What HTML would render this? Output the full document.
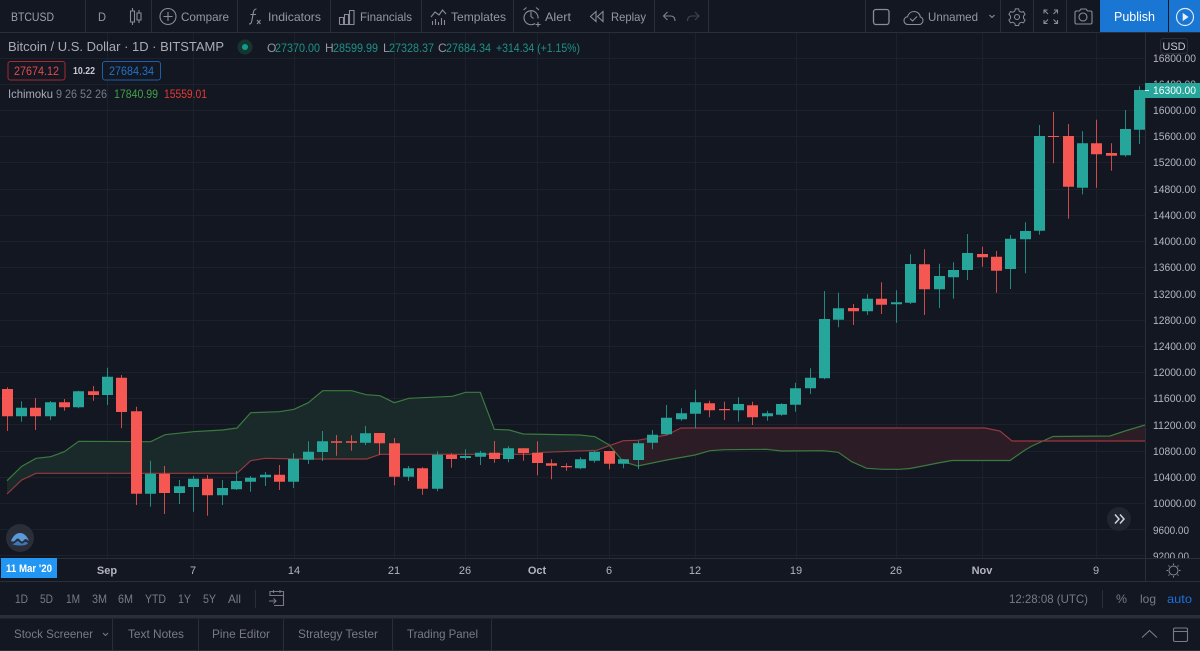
<!DOCTYPE html>
<html><head><meta charset="utf-8"><title>BTCUSD</title>
<style>
html,body{margin:0;padding:0;background:#131722;width:1200px;height:651px;overflow:hidden}
svg{display:block;font-family:"Liberation Sans",sans-serif;filter:blur(.3px)}
.t{fill:#9598a1;font-size:12px}
.i{fill:none;stroke:#8a8d97;stroke-width:1.1}
.p{fill:#b2b5be;font-size:11px}
.a{fill:#b2b5be;font-size:11px;text-anchor:middle}
.b{fill:#b2b5be;font-size:11px;font-weight:bold;text-anchor:middle}
.m{fill:#787b86;font-size:12px}
.g{fill:#1f9186;font-size:12px}
.l{fill:#9598a1;font-size:12px}
</style></head><body>
<svg width="1200" height="651" viewBox="0 0 1200 651" xmlns="http://www.w3.org/2000/svg">
<rect width="1200" height="651" fill="#131722"/>
<!-- grid -->
<path stroke="#1d212c" stroke-width="1" fill="none" d="M0 58.5H1145M0 84.5H1145M0 110.5H1145M0 136.5H1145M0 162.5H1145M0 189.5H1145M0 215.5H1145M0 241.5H1145M0 267.5H1145M0 293.5H1145M0 320.5H1145M0 346.5H1145M0 372.5H1145M0 398.5H1145M0 424.5H1145M0 451.5H1145M0 477.5H1145M0 503.5H1145M0 529.5H1145M0 555.5H1145M107.5 33V558M193.5 33V558M294.5 33V558M394.5 33V558M465.5 33V558M537.5 33V558M609.5 33V558M695.5 33V558M796.5 33V558M896.5 33V558M982.5 33V558M1096.5 33V558"/>
<!-- cloud -->
<path fill="#1a2a2a" d="M7 480.7L21.7 466.3 36 458.3 50.7 456.7 64.3 451.7 78.7 441.3 150.7 441.7 165 434.7 193.3 431.7 222.3 430 237 428 250.7 412.7 279.3 411.7 294 409.3 308.3 402.7 322.7 390.7 351.7 390.7 366 394.7 380 395.7 394.3 402.7 409 398.3 452.3 396.3 465.7 392.3 480.3 392.3 494.3 429.3 509.3 430 523.3 434 580 435 595 436.7 609.3 445.5 596.7 450.3 543 452.3 530 454.3 380 454.3 366.7 459 300 459 265 458.3 250.7 460.7 237 473.3 36 473.3 21.7 480 7 494Z"/>
<path fill="#2c1c26" d="M609.3 445.5L623.3 440.7 637.7 440.3 666.7 435 681 428 985 428 1000 431 1012 441 1145 441 1145 425 1125 431 1110 436 1053 436.5 1032 446 1025 450 1010 460.5 952 460.5 938 463 923 466 910 468.5 900 469.3 883 469.3 866.7 468.3 851.7 461.7 838.3 452.3 823.3 450.7 781.7 451 766.7 449.3 724 449.7 710 450.7 695 455 666.7 460 637.7 466 623.3 461.7Z"/>
<path fill="none" stroke="#3b7a3e" stroke-width="1.2" d="M7 480.7L21.7 466.3 36 458.3 50.7 456.7 64.3 451.7 78.7 441.3 150.7 441.7 165 434.7 193.3 431.7 222.3 430 237 428 250.7 412.7 279.3 411.7 294 409.3 308.3 402.7 322.7 390.7 351.7 390.7 366 394.7 380 395.7 394.3 402.7 409 398.3 452.3 396.3 465.7 392.3 480.3 392.3 494.3 429.3 509.3 430 523.3 434 580 435 595 436.7 609.3 445 623.3 461.7 637.7 466 666.7 460 695 455 710 450.7 724 449.7 766.7 449.3 781.7 451 823.3 450.7 838.3 452.3 851.7 461.7 866.7 468.3 883 469.3 900 469.3 910 468.5 923 466 938 463 952 460.5 1010 460.5 1025 450 1032 446 1053 436.5 1110 436 1125 431 1145 425"/>
<path fill="none" stroke="#98383e" stroke-width="1.2" d="M7 494L21.7 480 36 473.3 237 473.3 250.7 460.7 265 458.3 300 459 366.7 459 380 454.3 530 454.3 543 452.3 596.7 450.3 609.3 445.7 623.3 440.7 637.7 440.3 666.7 435 681 428 985 428 1000 431 1012 441 1145 441"/>
<!-- green wicks -->
<path fill="none" stroke="#26a69a" stroke-opacity=".8" stroke-width="1" d="M21.5 401.3V421.7M50.5 401V420M78.5 390.7V408.3M107.5 367.7V405M150.5 460.7V506.7M179.5 480V504M193.5 476V511.7M222.5 480V505M236.5 471V490M250.5 476V491.7M265.5 472V486M293.5 453.3V488M308.5 441.3V464M322.5 431V461M365.5 426V445M408.5 466V481M437.5 451.3V491.3M465.5 449.3V460M480.5 450.7V465M508.5 446.3V462.3M580.5 457.3V469.3M594.5 451V462.7M623.5 459V468.3M638.5 440.7V469.3M652.5 430V449.3M666.5 405V435M681.5 408.3V420.7M695.5 389.7V428.3M738.5 397.3V421.7M767.5 410.7V420.7M781.5 403.3V415.7M795.5 382.7V411.7M810.5 368.3V394M824.5 291V379.3M838.5 292.7V327.3M867.5 294.3V315M896.5 290.3V322.7M910.5 254.3V304M939.5 263.7V308M953.5 262.3V298.7M967.5 234V280M1010.5 235V289M1025.5 222.3V273.3M1039.5 125V234.7M1082.5 131.3V194.3M1125.5 110V156.7M1139.5 86V144"/>
<!-- red wicks -->
<path fill="none" stroke="#ef5350" stroke-opacity=".85" stroke-width="1" d="M7.5 387.3V431M35.5 398V430M64.5 399V410.7M93.5 386V400.7M121.5 375V428.3M136.5 406.7V505M164.5 466V514M207.5 475V515.7M279.5 465V490M336.5 435V455.7M351.5 435.3V450.7M379.5 433V455M394.5 438V485.3M422.5 467.3V494.7M451.5 453.3V467.7M494.5 441V462.7M523.5 448.3V460.7M537.5 441.3V475.3M551.5 459.3V479.3M566.5 463.3V470.7M609.5 451V469.3M709.5 400.7V417.3M724.5 401.7V420M752.5 401.7V425M853.5 304V325M881.5 282.3V314M924.5 249.3V315M982.5 246.7V266.7M996.5 251V292.7M1053.5 112V163.3M1068.5 124V218.7M1096.5 119.7V187.7M1111.5 143.3V170.7"/>
<!-- green bodies -->
<path fill="none" stroke="#26a69a" stroke-width="11" d="M21.5 407.7V416.3M50.5 402.3V416.3M78.5 391.3V407.3M107.5 376.7V395M150.5 473.7V493.7M179.5 486.3V493M193.5 478.7V487M222.5 488V495.3M236.5 481V489.3M250.5 477.7V481.7M265.5 474.7V477.3M293.5 459V481.7M308.5 451.7V459.7M322.5 441.3V452M365.5 433.3V442.7M408.5 468.3V476.7M437.5 454.7V488.7M465.5 456V458M480.5 452.7V456.7M508.5 448.3V459M580.5 459.3V468.3M594.5 451.7V460.7M623.5 459.3V463.7M638.5 443.3V460M652.5 434.7V442.7M666.5 417.7V434.3M681.5 413.3V419.3M695.5 402.3V413.7M738.5 404V410.3M767.5 413.3V416.3M781.5 404V414.7M795.5 388.3V404.7M810.5 377.7V388.3M824.5 319V378.3M838.5 308.3V319.7M867.5 298.7V311.3M896.5 302.3V304.3M910.5 264V302.7M939.5 276V289.3M953.5 270V277.3M967.5 253V270M1010.5 238.7V269M1025.5 231V239.3M1039.5 136V230.7M1082.5 143.3V187.7M1125.5 129V155.3M1139.5 90V129.7"/>
<!-- red bodies -->
<path fill="none" stroke="#f55753" stroke-width="11" d="M7.5 389V416.3M35.5 407.7V416.3M64.5 402.3V407.3M93.5 391.3V395M121.5 377.7V412M136.5 411.3V493.7M164.5 473.7V493M207.5 478.7V495.3M279.5 474.7V481.7M336.5 441.3V442.7M351.5 441.3V442.7M379.5 433V443.3M394.5 443.3V476.7M422.5 468.3V488.7M451.5 454.7V459M494.5 452.7V459M523.5 448.3V453M537.5 452.7V463M551.5 463.3V465.7M566.5 466V467.3M609.5 451V463.7M709.5 403.3V410.3M724.5 409V410.3M752.5 405.3V417.3M853.5 308V311.3M881.5 298.7V304.7M924.5 264.3V289.3M982.5 254V257.3M996.5 256.7V270.7M1053.5 136V137M1068.5 136V186.7M1096.5 143.3V154.3M1111.5 153V155.7"/>

<!-- right price axis -->
<rect x="1145" y="33" width="55" height="525" fill="#131722"/>
<path d="M1145.5 33V581" stroke="#2a2e39"/>
<g class="p">
<text x="1153" y="62" textLength="43" lengthAdjust="spacingAndGlyphs">16800.00</text>
<text x="1153" y="88" textLength="43" lengthAdjust="spacingAndGlyphs">16400.00</text>
<text x="1153" y="114" textLength="43" lengthAdjust="spacingAndGlyphs">16000.00</text>
<text x="1153" y="140" textLength="43" lengthAdjust="spacingAndGlyphs">15600.00</text>
<text x="1153" y="166" textLength="43" lengthAdjust="spacingAndGlyphs">15200.00</text>
<text x="1153" y="193" textLength="43" lengthAdjust="spacingAndGlyphs">14800.00</text>
<text x="1153" y="219" textLength="43" lengthAdjust="spacingAndGlyphs">14400.00</text>
<text x="1153" y="245" textLength="43" lengthAdjust="spacingAndGlyphs">14000.00</text>
<text x="1153" y="271" textLength="43" lengthAdjust="spacingAndGlyphs">13600.00</text>
<text x="1153" y="298" textLength="43" lengthAdjust="spacingAndGlyphs">13200.00</text>
<text x="1153" y="324" textLength="43" lengthAdjust="spacingAndGlyphs">12800.00</text>
<text x="1153" y="350" textLength="43" lengthAdjust="spacingAndGlyphs">12400.00</text>
<text x="1153" y="376" textLength="43" lengthAdjust="spacingAndGlyphs">12000.00</text>
<text x="1153" y="402" textLength="43" lengthAdjust="spacingAndGlyphs">11600.00</text>
<text x="1153" y="429" textLength="43" lengthAdjust="spacingAndGlyphs">11200.00</text>
<text x="1153" y="455" textLength="43" lengthAdjust="spacingAndGlyphs">10800.00</text>
<text x="1153" y="481" textLength="43" lengthAdjust="spacingAndGlyphs">10400.00</text>
<text x="1153" y="507" textLength="43" lengthAdjust="spacingAndGlyphs">10000.00</text>
<text x="1153" y="534" textLength="36" lengthAdjust="spacingAndGlyphs">9600.00</text>
<text x="1153" y="560" textLength="36" lengthAdjust="spacingAndGlyphs">9200.00</text>
</g>
<rect x="1145" y="83" width="55" height="15" fill="#26a69a"/>
<path d="M1145 90.5H1149" stroke="#e8f5f3"/>
<text x="1153" y="94" font-size="11" fill="#ffffff" textLength="43" lengthAdjust="spacingAndGlyphs">16300.00</text>
<rect x="1160.5" y="38.5" width="27" height="15" rx="3" fill="#131722" stroke="#2a2e39"/>
<text x="1174" y="50" class="a" style="fill:#c6c8cf">USD</text>

<!-- time axis -->
<rect x="0" y="558" width="1200" height="23" fill="#131722"/>
<path d="M0 558.5H1200M0 581.5H1200" stroke="#2a2e39"/>
<path d="M1145.5 558V581" stroke="#2a2e39"/>
<text x="107" y="574" class="b">Sep</text>
<text x="193" y="574" class="a">7</text>
<text x="294" y="574" class="a">14</text>
<text x="394" y="574" class="a">21</text>
<text x="465" y="574" class="a">26</text>
<text x="537" y="574" class="b">Oct</text>
<text x="609" y="574" class="a">6</text>
<text x="695" y="574" class="a">12</text>
<text x="796" y="574" class="a">19</text>
<text x="896" y="574" class="a">26</text>
<text x="982" y="574" class="b">Nov</text>
<text x="1096" y="574" class="a">9</text>
<rect x="1" y="558" width="56" height="20" fill="#2196f3"/>
<text x="6" y="572" font-size="11" font-weight="bold" fill="#fff" textLength="46" lengthAdjust="spacingAndGlyphs">11 Mar '20</text>
<g fill="none" stroke="#8a8d97" stroke-width="1">
<circle cx="1173.5" cy="570.5" r="4.5"/>
<path d="M1173.5 563.5v1.5M1173.5 576v1.5M1166.5 570.5h1.5M1179 570.5h1.5M1168.5 565.5l1 1M1177.5 574.5l1 1M1178.5 565.5l-1 1M1169.5 574.5l-1 1"/>
</g>

<!-- top toolbar -->
<rect x="0" y="0" width="1200" height="32" fill="#131722"/>
<path d="M0 32.5H1200M85.5 0V32M151.5 0V32M237.5 0V32M330.5 0V32M421.5 0V32M513.5 0V32M654.5 0V32M708.5 0V32M865.5 0V32M1000.5 0V32M1033.5 0V32M1066.5 0V32" stroke="#2a2e39"/>
<text x="11" y="21" font-size="12" fill="#9ea1aa" textLength="43" lengthAdjust="spacingAndGlyphs">BTCUSD</text>
<text x="98" y="21" class="t" textLength="8" lengthAdjust="spacingAndGlyphs">D</text>
<path class="i" d="M132.5 8V11M132.5 22V25M130.500 11h4v11h-4zM139 10V13M139 20V23M137 13h4v7h-4z"/>
<circle class="i" cx="168" cy="16.5" r="8"/><path class="i" d="M168 12v9M163.500 16.500h9"/>
<text x="181" y="21" class="t" textLength="48" lengthAdjust="spacingAndGlyphs">Compare</text>
<path class="i" d="M249 24c2 0 2.500-1 3-4l1.500-8c.4-2 1.300-3 3-3M250.500 14.500h5.500M257 20l3.500 4M260.500 20l-3.500 4"/>
<text x="268" y="21" class="t" textLength="53" lengthAdjust="spacingAndGlyphs">Indicators</text>
<path class="i" d="M339.500 24.500h15M339.500 24.500v-7h4v7M344.500 24.500v-10h4v10M349.500 24.500v-14h4.500v14"/>
<text x="360" y="21" class="t" textLength="52" lengthAdjust="spacingAndGlyphs">Financials</text>
<path class="i" d="M431 17l4-5 4 3 3.500-5 3.500 4M432.500 25v-4M435.500 25v-6M438.500 25v-3M441.500 25v-7M444.500 25v-5"/>
<text x="451" y="21" class="t" textLength="55" lengthAdjust="spacingAndGlyphs">Templates</text>
<path class="i" d="M535 23.500a7 7 0 1 1 3-5M531 11.500v5l2.500 2M523.500 10l3-2.500M539 10l-3-2.500M535.500 24.500h5M538 22v5"/>
<text x="545" y="21" class="t" textLength="26" lengthAdjust="spacingAndGlyphs">Alert</text>
<path class="i" d="M596 11.500l-5.500 5 5.500 5zM603 11.500l-5.500 5 5.500 5z"/>
<text x="611" y="21" class="t" textLength="35" lengthAdjust="spacingAndGlyphs">Replay</text>
<path class="i" d="M667.500 12l-4 4 4 4M663.500 16h7c3 0 4.500 2 4.500 5" stroke-opacity=".9"/>
<path fill="none" stroke="#434651" stroke-width="1.1" d="M695 12l4 4-4 4M699 16h-7c-3 0-4.500 2-4.500 5"/>
<rect x="873.500" y="9.500" width="15.500" height="15" rx="2.500" class="i" style="stroke-width:1.300"/>
<path class="i" d="M908 24.500c-2.500 0-4-1.800-4-4 0-2 1.500-3.500 3.500-3.700C908.500 13.500 911 11.500 914 11.500c3.500 0 6 2.500 6.300 5.500 1.800.5 2.700 2 2.700 3.500 0 2.200-1.700 4-4 4zM910 18.500l2.500 2.500 4.500-4.500"/>
<text x="928" y="21" class="t" textLength="50" lengthAdjust="spacingAndGlyphs">Unnamed</text>
<path class="i" d="M989.500 15l2.500 2.500 2.500-2.500"/>
<path class="i" d="M1015.200 8.500h3.600l.7 2.500 2.200 1.200 2.500-.7 1.800 3.100-1.800 1.900v2.500l1.800 1.900-1.800 3.100-2.500-.7-2.200 1.200-.7 2.500h-3.600l-.7-2.500-2.200-1.200-2.500.7-1.800-3.100 1.800-1.900v-2.500l-1.800-1.900 1.800-3.100 2.500.7 2.200-1.200z" transform="translate(1017 17) scale(.9) translate(-1017 -17.500)"/>
<circle class="i" cx="1017" cy="17" r="2.500"/>
<path class="i" d="M1044 13.500V10h3.500M1044 10l4 4M1057.500 13.500V10H1054M1057.500 10l-4 4M1044 20v3.500h3.500M1044 23.500l4-4M1057.500 20v3.500H1054M1057.500 23.500l-4-4"/>
<path class="i" d="M1075 12.500a1.500 1.500 0 0 1 1.500-1.500h3l1.500-2h5l1.500 2h3a1.500 1.500 0 0 1 1.500 1.500v10a1.500 1.500 0 0 1-1.500 1.500h-14a1.500 1.500 0 0 1-1.500-1.500z"/>
<circle class="i" cx="1083" cy="17" r="4"/>
<rect x="1100" y="0" width="68" height="32" fill="#1976d2"/>
<rect x="1169" y="0" width="31" height="32" fill="#1976d2"/>
<text x="1114" y="21" font-size="12.500" fill="#fff" textLength="41" lengthAdjust="spacingAndGlyphs">Publish</text>
<circle cx="1185" cy="17" r="8.500" fill="none" stroke="#dbe9f8" stroke-width="1.200"/>
<path d="M1183 13.500v7l5-3.500z" fill="#e8f1fb" stroke="#e8f1fb" stroke-width=".6"/>

<!-- legend -->
<text x="8" y="51" font-size="13" fill="#a9acb5" textLength="216" lengthAdjust="spacingAndGlyphs">Bitcoin / U.S. Dollar · 1D · BITSTAMP</text>
<circle cx="245" cy="47" r="7.500" fill="#16352f"/>
<circle cx="245" cy="47" r="3" fill="#0d9e8b"/>
<text x="267" y="52" class="l">O</text><text x="275" y="52" class="g" textLength="45" lengthAdjust="spacingAndGlyphs">27370.00</text>
<text x="325" y="52" class="l">H</text><text x="333" y="52" class="g" textLength="45" lengthAdjust="spacingAndGlyphs">28599.99</text>
<text x="383" y="52" class="l">L</text><text x="389" y="52" class="g" textLength="45" lengthAdjust="spacingAndGlyphs">27328.37</text>
<text x="438" y="52" class="l">C</text><text x="446" y="52" class="g" textLength="45" lengthAdjust="spacingAndGlyphs">27684.34</text>
<text x="496" y="52" class="g" textLength="84" lengthAdjust="spacingAndGlyphs">+314.34 (+1.15%)</text>
<rect x="8" y="61.500" width="57" height="18.500" rx="2.500" fill="#131722" stroke="#a52a32"/>
<text x="14" y="75" font-size="12" fill="#e64a4a" textLength="45" lengthAdjust="spacingAndGlyphs">27674.12</text>
<text x="73" y="74" font-size="10" font-weight="bold" fill="#c8cad0" textLength="22" lengthAdjust="spacingAndGlyphs">10.22</text>
<rect x="102.500" y="61.500" width="58" height="18.500" rx="2.500" fill="#131722" stroke="#1c5fa8"/>
<text x="109" y="75" font-size="12" fill="#2272c8" textLength="45" lengthAdjust="spacingAndGlyphs">27684.34</text>
<text x="8" y="98" font-size="12" fill="#a9acb5" textLength="45" lengthAdjust="spacingAndGlyphs">Ichimoku</text>
<text x="56" y="98" font-size="12" fill="#787b86" textLength="51" lengthAdjust="spacingAndGlyphs">9 26 52 26</text>
<text x="114" y="98" font-size="12" fill="#43a047" textLength="44" lengthAdjust="spacingAndGlyphs">17840.99</text>
<text x="164" y="98" font-size="12" fill="#e53935" textLength="43" lengthAdjust="spacingAndGlyphs">15559.01</text>

<!-- floating buttons -->
<circle cx="20" cy="538" r="14" fill="#2a2e39"/>
<path d="M11 541c2-5 5-8 9-8s7 3 9 8c-2-2-4-2.500-5-1-1.500 2-2.500 2-4 0-1.500-2-3-2-4.500 0-1.200 1.500-2.500 2-4.500 1z" fill="#5a9ad8"/>
<path d="M12 544c2 0 3-1 4-2 1.500-1.500 2.500-1 4 .5 1.500 1.500 2.500 1.500 4 0 1-1 2.500-1 4 1-2 1.500-4 2-8 2s-6-.5-8-1.500z" fill="#3b78b8"/>
<circle cx="1119" cy="519" r="12" fill="#21252f"/>
<path d="M1115 514.500l4 4.500-4 4.500M1120 514.500l4 4.500-4 4.500" fill="none" stroke="#d1d4dc" stroke-width="1.500"/>

<!-- range toolbar -->
<g class="m">
<text x="15" y="603" textLength="13" lengthAdjust="spacingAndGlyphs">1D</text>
<text x="40" y="603" textLength="13" lengthAdjust="spacingAndGlyphs">5D</text>
<text x="66" y="603" textLength="14" lengthAdjust="spacingAndGlyphs">1M</text>
<text x="92" y="603" textLength="15" lengthAdjust="spacingAndGlyphs">3M</text>
<text x="118" y="603" textLength="15" lengthAdjust="spacingAndGlyphs">6M</text>
<text x="145" y="603" textLength="21" lengthAdjust="spacingAndGlyphs">YTD</text>
<text x="178" y="603" textLength="13" lengthAdjust="spacingAndGlyphs">1Y</text>
<text x="203" y="603" textLength="13" lengthAdjust="spacingAndGlyphs">5Y</text>
<text x="228" y="603" textLength="13" lengthAdjust="spacingAndGlyphs">All</text>
<text x="1009" y="603" textLength="79" lengthAdjust="spacingAndGlyphs">12:28:08 (UTC)</text>
<text x="1116" y="603" textLength="11" lengthAdjust="spacingAndGlyphs">%</text>
<text x="1140" y="603" textLength="16" lengthAdjust="spacingAndGlyphs">log</text>
</g>
<text x="1167" y="603" font-size="12" fill="#1e6fdb" textLength="25" lengthAdjust="spacingAndGlyphs">auto</text>
<path d="M255.500 590V608M1102.500 590V608" stroke="#2a2e39"/>
<path class="i" d="M270 596v-4.500h13.500v14H274M273.500 590v3M280 590v3M270 595.500h13.500M269 601h7M273.500 598.500l2.500 2.500-2.500 2.500" style="stroke:#787b86"/>

<!-- bottom panel -->
<rect x="0" y="615" width="1200" height="3.500" fill="#2a2e39"/>
<rect x="0" y="618.500" width="1200" height="32.500" fill="#131722"/>
<path d="M112.500 619V650M198.500 619V650M283.500 619V650M392.500 619V650M491.500 619V650" stroke="#2a2e39"/>
<path d="M0 650.500H1200" stroke="#2a2e39"/>
<g class="m">
<text x="14" y="638" textLength="79" lengthAdjust="spacingAndGlyphs">Stock Screener</text>
<text x="128" y="638" textLength="56" lengthAdjust="spacingAndGlyphs">Text Notes</text>
<text x="212" y="638" textLength="58" lengthAdjust="spacingAndGlyphs">Pine Editor</text>
<text x="298" y="638" textLength="80" lengthAdjust="spacingAndGlyphs">Strategy Tester</text>
<text x="407" y="638" textLength="71" lengthAdjust="spacingAndGlyphs">Trading Panel</text>
</g>
<path d="M103 633l2.500 2.500 2.500-2.500" fill="none" stroke="#787b86"/>
<path d="M1142 637.500l7.500-7 7.500 7" fill="none" stroke="#787b86" stroke-width="1.100"/>
<rect x="1173.500" y="628" width="14" height="13.500" rx="1.500" fill="none" stroke="#787b86" stroke-width="1.100"/>
<path d="M1173.500 631.500h14" stroke="#787b86"/>
</svg>
</body></html>
